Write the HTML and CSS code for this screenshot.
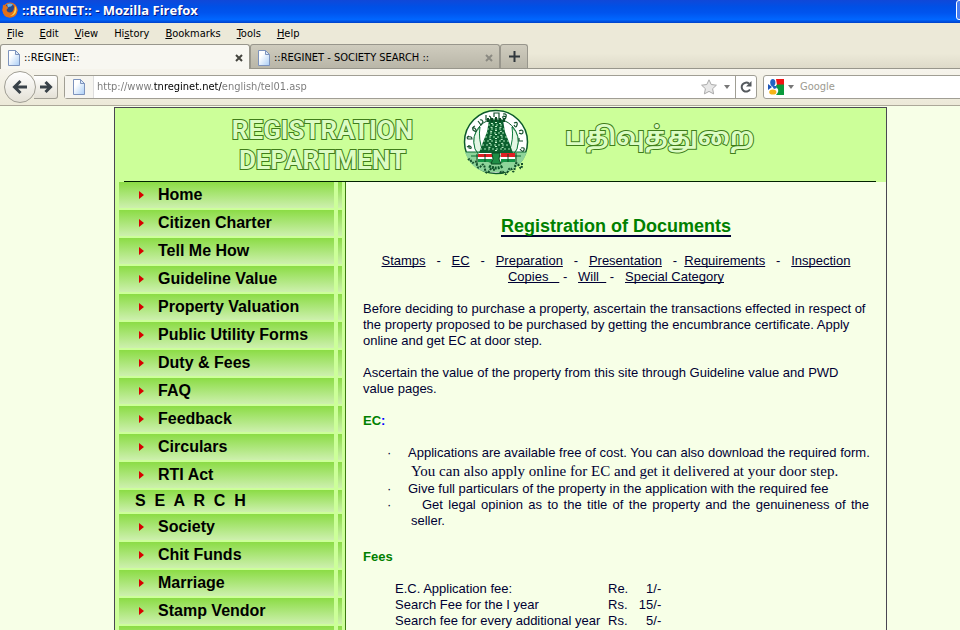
FILE: index.html
```html
<!DOCTYPE html>
<html lang="en">
<head>
  <title>::REGINET::</title>
  <meta charset="UTF-8">
  <link rel="stylesheet" href="styles.css">
</head>
<body>
  <svg class="defs" aria-hidden="true">
    <defs>
      <linearGradient id="paper" x1="0" y1="0" x2="1" y2="1">
        <stop offset="0.3" stop-color="#fff"/>
        <stop offset="1" stop-color="#a9cdf6"/>
      </linearGradient>
      <symbol id="page-icon" viewBox="0 0 14 16">
        <path d="M1.5 .5h7l4 4v11h-11z" fill="url(#paper)" stroke="#7d93bd"/>
        <path d="M8.500 .5v4h4z" fill="#dce9fa" stroke="#7d93bd"/>
      </symbol>
    </defs>
  </svg>

  <header class="browser">
    <div class="title-bar">
      <svg class="fox" viewBox="0 0 16 16">
        <circle cx="8" cy="8" r="7.500" fill="#e8701a"/>
        <circle cx="8" cy="6.500" r="5" fill="#27488c"/>
        <path d="M5 2.500q3-2 6 0l-2 2q-2 0-3 1z" fill="#6db4e8"/>
        <path d="M1 2.500q1 1 3 1.500 1.500 0 2 2L4.500 8q1 3 4 2.500 2-.5 3-2.500 1.500-3-.5-6 4.500 2 4.500 6.500-1 7-7.500 7Q1 15 .5 8.500z" fill="#e2701a"/>
        <path d="M13 4q2.500 3 .5 7-2 3-5.500 3 5-2 5-10z" fill="#fcd34a"/>
      </svg>
      <span class="title">::REGINET:: - Mozilla Firefox</span>
      <button class="minimize" aria-label="Minimize"></button>
    </div>

    <nav class="menu-bar">
      <button><u>F</u>ile</button>
      <button><u>E</u>dit</button>
      <button><u>V</u>iew</button>
      <button>Hi<u>s</u>tory</button>
      <button><u>B</u>ookmarks</button>
      <button><u>T</u>ools</button>
      <button><u>H</u>elp</button>
    </nav>

    <div class="tabs">
      <div class="tab active">
        <svg class="page-icon"><use href="#page-icon"/></svg>
        <span>::REGINET::</span>
        <button class="close" aria-label="Close tab">
          <svg viewBox="0 0 8 8"><path d="M1 1l6 6M7 1L1 7"/></svg>
        </button>
      </div>
      <div class="tab">
        <svg class="page-icon"><use href="#page-icon"/></svg>
        <span>::REGINET - SOCIETY SEARCH ::</span>
        <button class="close" aria-label="Close tab">
          <svg viewBox="0 0 8 8"><path d="M1 1l6 6M7 1L1 7"/></svg>
        </button>
      </div>
      <button class="new-tab" aria-label="New tab">
        <svg viewBox="0 0 11 11"><path d="M5.500 0v11M0 5.500h11"/></svg>
      </button>
    </div>

    <div class="toolbar">
      <button class="back" aria-label="Back">
        <svg viewBox="0 0 16 16"><path d="M15 8H3M8.500 2L2.500 8l6 6"/></svg>
      </button>
      <button class="forward" aria-label="Forward">
        <svg viewBox="0 0 14 14"><path d="M1 7h10M6.500 2l5 5-5 5"/></svg>
      </button>
      <div class="url-box">
        <span class="identity"><svg class="page-icon"><use href="#page-icon"/></svg></span>
        <input class="url" type="text" aria-label="Address" value="http://www.tnreginet.net/english/tel01.asp">
        <svg class="star" viewBox="0 0 16 16"><path d="M8 .8l2.200 4.700 5.200.7-3.800 3.500 1 5.200L8 12.400l-4.600 2.500 1-5.200L.6 6.200l5.200-.7z"/></svg>
        <svg class="arrow" viewBox="0 0 6 4"><path d="M0 0h6L3 4z"/></svg>
        <button class="reload" aria-label="Reload">
          <svg viewBox="0 0 12 12"><path d="M9 2.600A4.500 4.500 0 1 0 10 8.500" fill="none" stroke="#54595d" stroke-width="2"/><path d="M11.500 0v5.500H6z" fill="#54595d"/></svg>
        </button>
      </div>
      <div class="search-box">
        <svg class="google" viewBox="0 0 16 16">
          <path d="M8 0h8v6H9z" fill="#f01414"/>
          <path d="M9 5.500h7V16H8q4-4 1-7-2-2 0-3.500z" fill="#0a9a3c"/>
          <path d="M0 5l4 3-4 3z" fill="#1b55b8"/>
          <ellipse cx="4.800" cy="3.600" rx="2.600" ry="3.600" fill="#2161c4"/>
          <path d="M4 7h4l1 2-3 1z" fill="#2161c4"/>
          <ellipse cx="4.800" cy="13" rx="3.600" ry="2.600" fill="#f5b417"/>
        </svg>
        <svg class="arrow" viewBox="0 0 6 4"><path d="M0 0h6L3 4z"/></svg>
        <input class="search" type="text" aria-label="Search" placeholder="Google">
      </div>
    </div>
  </header>

  <div class="site">
    <div class="banner">
      <h1>REGISTRATION<br>DEPARTMENT</h1>
      <svg class="emblem" viewBox="0 0 66 68" role="img" aria-label="Tamil Nadu Government">
        <circle cx="33" cy="33" r="31.500" fill="#fff" stroke="#0c5a2b" stroke-width="1.500"/>
        <path d="M2 43h62q-5 15-20 20H22Q7 59 2 43z" fill="#8ed49a"/>
        <circle cx="33" cy="32" r="22" fill="#fff" stroke="#0c5a2b" stroke-width="1"/>
        <path d="M3 43h60M8 47h50" stroke="#0c6b32"/>
        <path d="M12 40q-4-14 5-22-2 12 3 25h-6zM54 40q4-14-5-22 2 12-3 25h6z" fill="#e3f6e4" stroke="#0e7a3b"/>
        <path d="M26 11h14l2 12 4 10 4 11H16l4-11 4-10z" fill="#0b5f2e"/>
        <path d="M25 9v4M29 9v4M33 8v5M37 9v4M41 9v4" stroke="#0b4a22" stroke-width="2"/>
        <path d="M25 16h16M24 20h18M23 24h20M22 28h22M20 32h26M19 36h28M17 40h32" stroke="#a7e6b4" stroke-dasharray="2 2"/>
        <path d="M33 13v30M29 14l-3 28M37 14l3 28" stroke="#caf3cf" stroke-dasharray="1 3" stroke-width="2"/>
        <path d="M15 45h14v3H15zM38 44h14v4H38z" fill="#e01f24"/>
        <path d="M15 48h14v2H15zM38 48h14v2H38z" fill="#fff"/>
        <path d="M15 50h14v3H15zM38 50h14v3H38z" fill="#159447"/>
        <path d="M29 44h8l-1 6 2 5H28l2-5zM14 45v10M53 44v11M22 45v8M45 45v8" fill="#1f8d46" stroke="#0b4a22"/>
        <path d="M26 57q7 4 14 0" fill="none" stroke="#0c5a2b" stroke-width="3" stroke-dasharray="2 1"/>
        <g fill="none" stroke="#14502c" stroke-width="1.200">
          <path d="M4 38q3-2 4 0t-2 1v-3M5 28q4-1 4 2H5q-2-2 1-3M9 19q3-1 4 2t-3 0q-1-3 2-4M15 12l3 4 2-3q-1-3-3-2"/>
          <path d="M23 6v5h4q2-3-1-4M31 8V4h5v6M40 5q4-1 3 3t-3 1q-1-3 3-1M51 14q4-2 3 2t-3 0M56 22q4-2 4 1t-4 1M60 32h-4v-3M58 39q4-1 3 2t-4-1"/>
          <path d="M5 51q2-2 3 1t3 1 3 3 4 1 4 3 5 1 4 1" stroke-width="2" stroke-dasharray="2 1"/>
          <path d="M37 64q2-3 4 0t4-2 4-1 3-3 4-1 3-3" stroke-width="2" stroke-dasharray="2 1"/>
        </g>
      </svg>
      <h2 lang="ta">பதிவுத்துறை</h2>
    </div>

    <div class="columns">
      <nav class="side-menu">
        <a href="#">Home</a>
        <a href="#">Citizen Charter</a>
        <a href="#">Tell Me How</a>
        <a href="#">Guideline Value</a>
        <a href="#">Property Valuation</a>
        <a href="#">Public Utility Forms</a>
        <a href="#">Duty &amp; Fees</a>
        <a href="#">FAQ</a>
        <a href="#">Feedback</a>
        <a href="#">Circulars</a>
        <a href="#">RTI Act</a>
        <div class="heading">S  E  A  R  C  H</div>
        <a href="#">Society</a>
        <a href="#">Chit Funds</a>
        <a href="#">Marriage</a>
        <a href="#">Stamp Vendor</a>
        <a href="#">&nbsp;</a>
      </nav>

      <main class="content">
        <h3>Registration of Documents</h3>
        <p class="links">
          <a href="#">Stamps</a>&nbsp;&nbsp; -&nbsp;&nbsp; <a href="#">EC</a>&nbsp;&nbsp; -&nbsp;&nbsp; <a href="#">Preparation</a>&nbsp;&nbsp; -&nbsp;&nbsp; <a href="#">Presentation</a>&nbsp;&nbsp; -&nbsp; <a href="#">Requirements</a>&nbsp;&nbsp; -&nbsp;&nbsp; <a href="#">Inspection</a><br>
          <a href="#">Copies&nbsp;&nbsp;&nbsp;</a> -&nbsp;&nbsp; <a href="#">Will&nbsp;&nbsp;</a> -&nbsp;&nbsp; <a href="#">Special Category</a>
        </p>
        <p>Before deciding to purchase a property, ascertain the transactions effected in respect of the property proposed to be purchased by getting the encumbrance certificate. Apply online and get EC at door step.</p>
        <p>Ascertain the value of the property from this site through Guideline value and PWD value pages.</p>
        <h4>EC<span class="colon">:</span></h4>
        <ul>
          <li>Applications are available free of cost. You can also download the required form. <span class="apply">You can also apply online for EC and get it delivered at your door step.</span></li>
          <li>Give full particulars of the property in the application with the required fee</li>
          <li class="wide">Get legal opinion as to the title of the property and the genuineness of the seller.</li>
        </ul>
        <h4>Fees</h4>
        <table>
          <tr><td>E.C. Application fee:</td><td>Re.</td><td>1/-</td></tr>
          <tr><td>Search Fee for the I year</td><td>Rs.</td><td>15/-</td></tr>
          <tr><td>Search fee for every additional year</td><td>Rs.</td><td>5/-</td></tr>
        </table>
      </main>
    </div>
  </div>
</body>
</html>
```
FILE: styles.css
```css
:root {
  --chrome: #ece9d8;
  --chrome-border: #98968c;
  --page: #f7ffe7;
  --lime: #ccff99;
  --ink: #000033;
  --green: #008000;
}

* {
  box-sizing: border-box;
}

body {
  margin: 0;
  height: 100vh;
  overflow: hidden;
  display: flex;
  flex-direction: column;
  background: var(--page);
  color: var(--ink);
  font: 13px/16px "Liberation Sans", Arial, sans-serif;
}

button {
  padding: 0;
  border: 0;
  background: none;
  font: inherit;
  color: inherit;
}

input {
  min-width: 0;
  padding: 0;
  border: 0;
  outline: none;
  background: none;
  font: inherit;
}

.defs {
  position: absolute;
  width: 0;
  height: 0;
}

/* Browser window */
.browser {
  flex: none;
  overflow: hidden;
  background: var(--chrome);
  border-bottom: 1px solid #aca899;
  color: #000;
  font: 11px/16px "DejaVu Sans Condensed", Tahoma, sans-serif;
}

.title-bar {
  display: flex;
  align-items: center;
  height: 23px;
  padding: 0 0 3px 2px;
  gap: 4px;
  background: linear-gradient(#1048d8, #0050e6 30%, #0054ee 55%, #0066ff 85%, #0040c8);
}

.fox {
  width: 16px;
  height: 16px;
}

.title {
  color: #fff;
  font: bold 13px/16px "Open Sans", "Trebuchet MS", sans-serif;
  text-shadow: 1px 1px 0 #0a1883;
}

.minimize {
  width: 21px;
  height: 20px;
  margin-left: auto;
  margin-right: -17px;
  border: 1px solid #fff;
  border-radius: 3px;
  background: #4a7ef0;
}

.menu-bar {
  display: flex;
  gap: 16px;
  height: 21px;
  padding: 2px 7px;
}

.tabs {
  display: flex;
  height: 25px;
  background: linear-gradient(transparent 40%, #dedac9);
  border-bottom: 1px solid var(--chrome-border);
}

.tab,
.new-tab {
  display: flex;
  align-items: center;
  border: 1px solid var(--chrome-border);
  border-bottom: 0;
  border-radius: 3px 3px 0 0;
  background: linear-gradient(#cfccbe, #b9b6a8);
}

.tab {
  width: 250px;
  gap: 3px;
  padding: 2px 6px 0;
}

.tab.active {
  height: 25px;
  background: #f8f7f1;
}

.new-tab {
  justify-content: center;
  width: 28px;
}

.new-tab svg {
  width: 11px;
  height: 11px;
  fill: none;
  stroke: #30373c;
  stroke-width: 2;
}

.page-icon {
  width: 14px;
  height: 16px;
}

.close {
  margin-left: auto;
  display: flex;
}

.close svg {
  width: 8px;
  height: 8px;
  stroke: #8b8a82;
  stroke-width: 2;
}

.active .close svg {
  stroke: #45453f;
}

.toolbar {
  display: flex;
  align-items: center;
  height: 36px;
  padding-left: 4px;
  background: linear-gradient(#f6f4ec, var(--chrome));
}

.back,
.forward {
  display: flex;
  align-items: center;
  justify-content: center;
  border: 1px solid #a09e94;
  background: linear-gradient(#fff, #e4e1d6);
}

.back {
  z-index: 1;
  width: 32px;
  height: 32px;
  border-radius: 50%;
}

.forward {
  width: 24px;
  height: 24px;
  margin-left: -2px;
  border-left: 0;
  border-radius: 0 3px 3px 0;
}

.back svg,
.forward svg {
  fill: none;
  stroke: #394249;
  stroke-width: 3;
}

.back svg {
  width: 16px;
  height: 16px;
}

.forward svg {
  width: 14px;
  height: 14px;
}

.url-box,
.search-box {
  display: flex;
  align-items: center;
  height: 24px;
  border: 1px solid #a09e94;
  border-radius: 3px;
  background: #fff;
}

.url-box {
  flex: 1;
  margin: 0 6px;
}

.identity {
  display: flex;
  align-items: center;
  justify-content: center;
  width: 29px;
  height: 100%;
  border-right: 1px solid #ddd;
  background: #f6f5f0;
}

/* the host name stands out from the rest of the address */
.url {
  flex: 1;
  margin-left: 3px;
  color: transparent;
  background: linear-gradient(90deg, #777 57px, #000 57px, #000 125px, #777 125px);
  -webkit-background-clip: text;
  background-clip: text;
}

.star {
  width: 16px;
  height: 16px;
  fill: #e8e8e8;
  stroke: #aaa;
}

.arrow {
  width: 6px;
  height: 4px;
  margin: 0 5px 0 7px;
  fill: #777;
}

.reload {
  display: flex;
  align-items: center;
  justify-content: center;
  width: 21px;
  height: 100%;
  border-left: 1px solid #a09e94;
}

.reload svg {
  width: 12px;
  height: 12px;
}

.search-box {
  width: 204px;
  margin-right: -7px;
  padding-left: 4px;
}

.google {
  width: 16px;
  height: 16px;
}

.search-box .arrow {
  margin: 0 6px 0 4px;
}

.search::placeholder {
  color: #9c9a90;
}

/* Site */
.site {
  flex: 1;
  display: flex;
  flex-direction: column;
  margin: 1px 73px 0 114px;
  border: 1px solid #4a4652;
  border-bottom: 0;
  overflow: hidden;
}

.banner {
  flex: none;
  display: flex;
  align-items: flex-start;
  height: 74px;
  padding-left: 115px;
  background:
    linear-gradient(#002200, #002200) 9px 100% / calc(100% - 19px) 1px no-repeat,
    var(--lime);
}

.banner h1,
.banner h2 {
  margin: 0;
  color: #dcfcc4;
  -webkit-text-stroke: 2px #3f7d1a;
  paint-order: stroke fill;
}

.banner h1 {
  width: 185px;
  margin-top: 7px;
  font: bold 26px/30px Roboto, "Arial Narrow", sans-serif;
  text-align: center;
}

.emblem {
  width: 66px;
  height: 68px;
  margin: 1px 36px 0 48px;
}

.banner h2 {
  margin-top: 10px;
  font: bold 25px/42px "Noto Sans Tamil", "Noto Sans", sans-serif;
}

.columns {
  flex: 1;
  display: flex;
  min-height: 0;
}

.side-menu {
  flex: none;
  width: 231px;
  padding: 0 3px 0 4px;
  border-right: 1px solid #3c7a10;
  background: var(--lime);
}

.side-menu a,
.side-menu .heading {
  display: flex;
  align-items: center;
  height: 26px;
  margin-bottom: 2px;
  padding-left: 20px;
  color: #000;
  background:
    linear-gradient(var(--lime), var(--lime)) 215px 0 / 4px 100% no-repeat,
    linear-gradient(#8bdc45, #cdf0ae);
  font: bold 16px/18px "Liberation Sans", Arial, sans-serif;
  text-decoration: none;
}

.side-menu a::before {
  content: "";
  margin-right: 14px;
  border: 4px solid transparent;
  border-left: 5px solid #d80000;
  border-right: 0;
}

.side-menu .heading {
  height: 22px;
  padding-left: 16px;
  white-space: pre;
}

.content {
  flex: 1;
  padding: 32px 17px 0;
}

.content h3 {
  margin: 0 0 15px;
  color: var(--green);
  font-size: 18px;
  line-height: 24px;
  text-align: center;
  text-decoration: underline 2px var(--ink);
  text-decoration-skip-ink: none;
  text-underline-offset: 3px;
}

.content p {
  margin: 0 0 16px;
}

.content a {
  color: var(--ink);
  text-decoration-skip-ink: none;
}

.content .links {
  text-align: center;
}

.content h4 {
  margin: 0 0 16px;
  color: var(--green);
  font-size: 13px;
}

.colon {
  color: #0000ff;
}

.content ul {
  margin: 0 0 20px;
  padding: 0 0 0 24px;
  list-style: none;
}

.content li {
  margin-right: -10px;
  padding-left: 24px;
  text-indent: -24px;
}

.content li::before {
  content: "·";
  display: inline-block;
  width: 21px;
  text-indent: 0;
}

.content .wide {
  margin-right: 0;
  text-align: justify;
}

.content .wide::before {
  width: 35px;
}

.apply {
  display: block;
  font: 15px/20px "Liberation Serif", "Times New Roman", serif;
  text-indent: 0;
}

.content table {
  margin-left: 32px;
  border-collapse: collapse;
}

.content td {
  padding: 0;
}

.content td:first-child {
  width: 213px;
}

.content td:last-child {
  width: 33px;
  text-align: right;
}
```
